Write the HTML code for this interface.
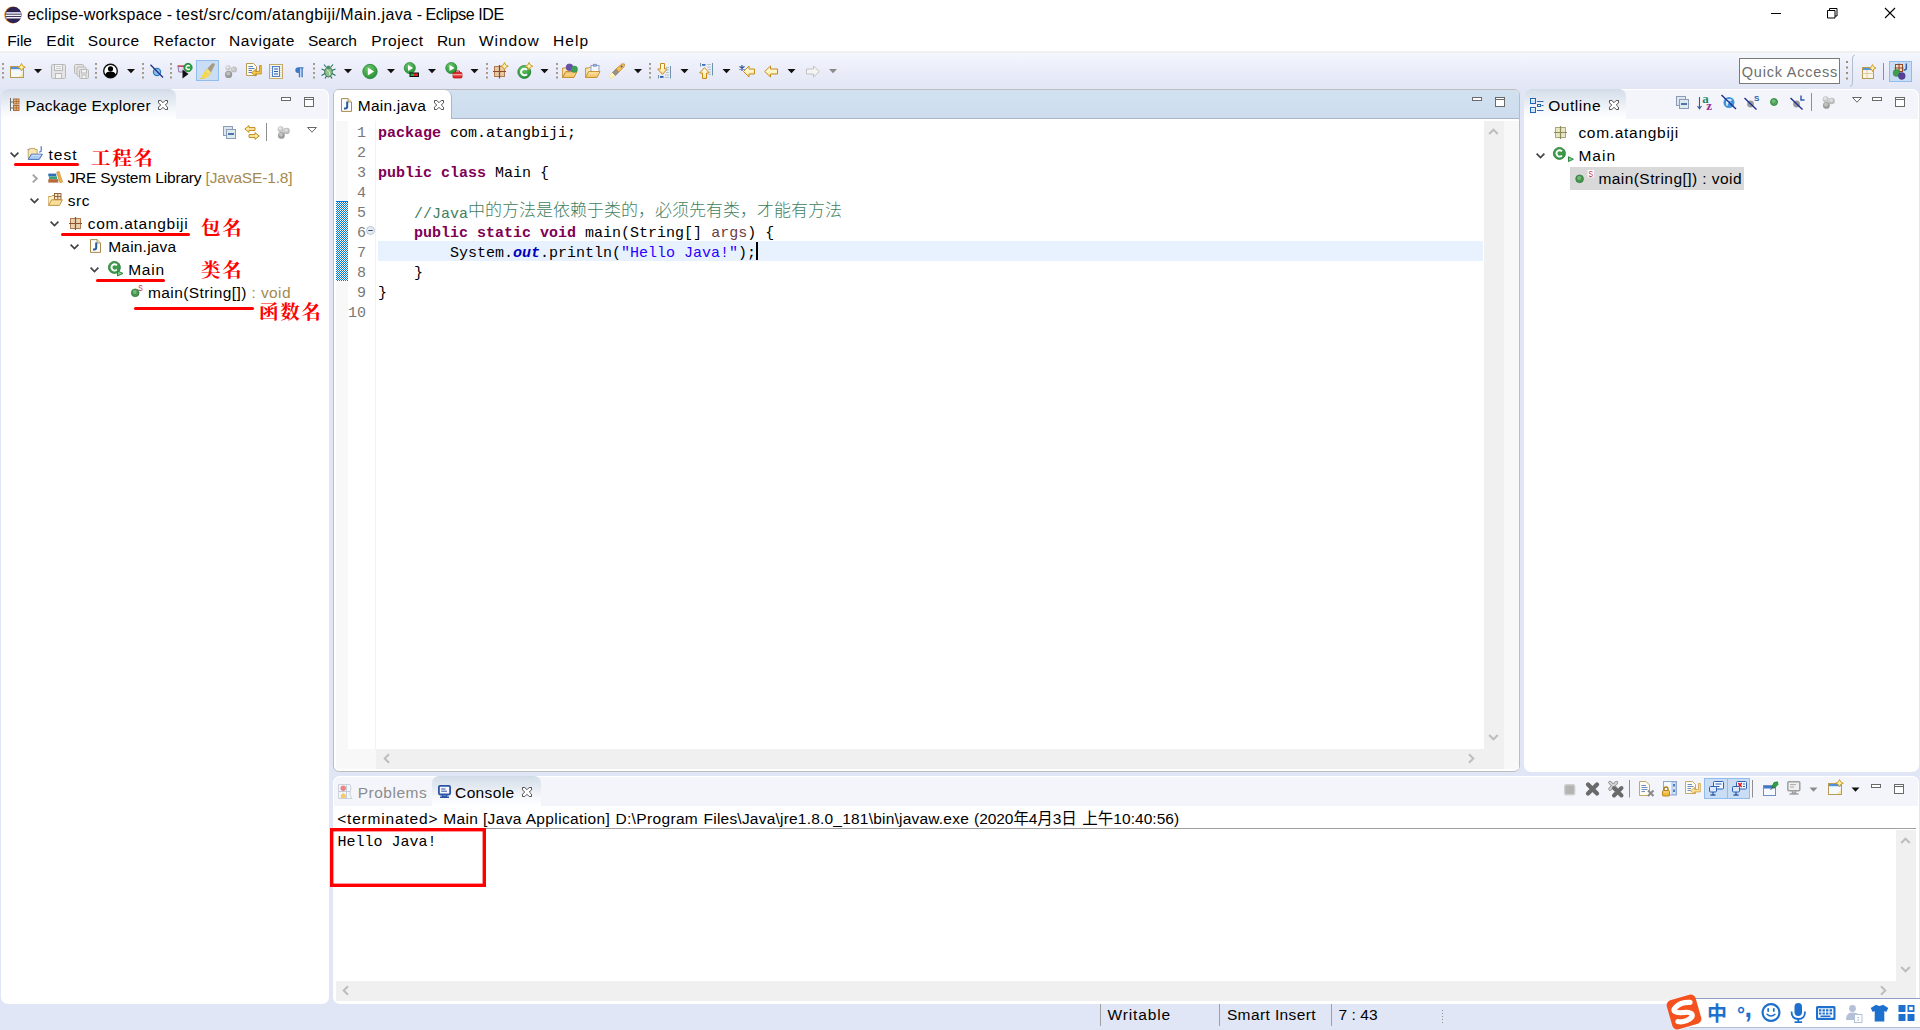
<!DOCTYPE html>
<html lang="en">
<head>
<meta charset="utf-8">
<title>eclipse-workspace - test/src/com/atangbiji/Main.java - Eclipse IDE</title>
<style>
html,body{margin:0;padding:0;}
body{width:1920px;height:1030px;overflow:hidden;position:relative;background:#E1E6F6;
  font-family:"Liberation Sans","Noto Sans CJK SC",sans-serif;font-size:15.5px;color:#000;}
.a{position:absolute;}
.x{position:absolute;white-space:pre;line-height:20px;height:20px;}
.mono{font-family:"Liberation Mono","Noto Sans CJK SC",monospace;font-size:15px;}
svg{position:absolute;overflow:visible;}
/* title + menu */
#titlebar{left:0;top:0;width:1920px;height:30px;background:#fff;}
#menubar{left:0;top:30px;width:1920px;height:21px;background:#fff;}
#menuline{left:0;top:51px;width:1920px;height:2px;background:#F0F0F0;}
#toolbar{left:0;top:53px;width:1920px;height:36px;background:linear-gradient(#F5F7FC 0%,#F0F3FC 20%,#E9ECF8 55%,#E1E6F6 100%);}
/* panels */
.panel{position:absolute;background:#fff;border-radius:7px;overflow:hidden;}
.hdr{position:absolute;left:0;top:0;right:0;height:30px;background:#F4F5FB;border:1px solid #fff;border-bottom:none;box-sizing:border-box;border-radius:7px 7px 0 0;}
.tab{position:absolute;top:0;height:30px;background:linear-gradient(#CFD8E3 0,#D4DEE9 1px,#E3E9F1 35%,#F5F7FA 70%,#FFFFFF 100%);border-radius:0 7px 0 0;}
.sep{position:absolute;width:1px;background:#8F8F8F;}
.dd{position:absolute;width:0;height:0;border-left:4px solid transparent;border-right:4px solid transparent;border-top:4px solid #111;}
.dd.g{border-top-color:#8a8a8a;}
.hdl{position:absolute;width:2px;height:17px;background:repeating-linear-gradient(#9C8F78 0 2px,transparent 2px 4px);}
.min{position:absolute;width:10px;height:4px;box-sizing:border-box;border:1px solid #6A6A6A;background:#fff;}
.max{position:absolute;width:10px;height:10px;box-sizing:border-box;border:1px solid #6A6A6A;background:linear-gradient(#fff 0 1px,#6A6A6A 1px 2px,#fff 2px) ;}
.tog{position:absolute;box-sizing:border-box;background:#C9DEF5;border:1px solid #90BDEE;}
.red{color:#FF0000;font-family:"Noto Serif CJK SC","Noto Sans CJK SC",serif;font-weight:700;font-size:19.5px;letter-spacing:1.8px;line-height:24px;height:24px;}
.ul{position:absolute;height:3px;border-radius:2px;background:#FF0000;}
.kw{color:#7F0055;font-weight:bold;}
.ln{position:absolute;left:14px;width:19px;text-align:right;color:#787878;line-height:20px;height:20px;white-space:pre;}
.cl{position:absolute;left:45px;line-height:20px;height:20px;white-space:pre;}
.sb{background:#F0F0F0;}
</style>
</head>
<body>

<!-- ===== Title bar ===== -->
<div id="titlebar" class="a"></div>
<div id="menubar" class="a"></div>
<div id="menuline" class="a"></div>
<div id="toolbar" class="a"></div>

<svg style="left:4px;top:6px" width="18" height="18" viewBox="0 0 18 18">
  <circle cx="8.6" cy="9" r="8.4" fill="#F7941E"/>
  <circle cx="9.4" cy="9" r="8.2" fill="#2C2255"/>
  <rect x="2.2" y="6.2" width="14.6" height="1.5" fill="#fff" opacity=".95"/>
  <rect x="1.6" y="8.6" width="15.6" height="1.5" fill="#fff" opacity=".95"/>
  <rect x="2.2" y="11" width="14.6" height="1.5" fill="#fff" opacity=".95"/>
</svg>
<span class="x" id="t_t1" style="left:26.9px;top:5.300px;font-size:16px;letter-spacing:0.21px">eclipse-workspace -</span>
<span class="x" id="t_t2" style="left:176.1px;top:5.300px;font-size:16px;letter-spacing:0.41px">test/src/com/atangbiji/Main.java</span>
<span class="x" id="t_t3" style="left:416.7px;top:5.300px;font-size:16px;letter-spacing:-0.42px">- Eclipse IDE</span>

<!-- window buttons -->
<svg style="left:1771px;top:8px" width="124" height="12" viewBox="0 0 124 12" fill="none" stroke="#000" stroke-width="1">
  <path d="M0 5.5H10"/>
  <path d="M56.5 2.5h7.500v7.500h-7.500z M58.500 2.500V.500h7.500V8h-2"/>
  <path d="M114 0l10 10M124 0l-10 10" stroke-width="1.1"/>
</svg>

<!-- ===== Menu ===== -->
<span class="x" id="m1" style="left:7.2px;top:30.600px;letter-spacing:-0.11px">File</span>
<span class="x" id="m2" style="left:46.3px;top:30.600px;letter-spacing:0.33px">Edit</span>
<span class="x" id="m3" style="left:87.8px;top:30.600px;letter-spacing:0.42px">Source</span>
<span class="x" id="m4" style="left:153.2px;top:30.600px;letter-spacing:0.55px">Refactor</span>
<span class="x" id="m5" style="left:229.1px;top:30.600px;letter-spacing:0.58px">Navigate</span>
<span class="x" id="m6" style="left:308.1px;top:30.600px;letter-spacing:-0.08px">Search</span>
<span class="x" id="m7" style="left:371.3px;top:30.600px;letter-spacing:0.59px">Project</span>
<span class="x" id="m8" style="left:436.9px;top:30.600px;letter-spacing:-0.02px">Run</span>
<span class="x" id="m9" style="left:479.1px;top:30.600px;letter-spacing:0.87px">Window</span>
<span class="x" id="m10" style="left:553.1px;top:30.600px;letter-spacing:1.02px">Help</span>

<!-- ===== Toolbar ===== -->
<!--TB-BEGIN-->
<svg id="tbsvg" style="left:0;top:52px" width="1920" height="37" viewBox="0 52 1920 37">
 <defs>
  <linearGradient id="gy" x1="0" y1="0" x2="0" y2="1"><stop offset="0" stop-color="#FFFBE6"/><stop offset=".55" stop-color="#FFF3C4"/><stop offset="1" stop-color="#F9DC85"/></linearGradient>
  <radialGradient id="gg" cx=".4" cy=".3" r=".8"><stop offset="0" stop-color="#6CC76A"/><stop offset="1" stop-color="#1E8A2E"/></radialGradient>
  <linearGradient id="gf" x1="0" y1="0" x2="0" y2="1"><stop offset="0" stop-color="#FCE6A6"/><stop offset="1" stop-color="#F2BE5A"/></linearGradient>
 </defs>
 <!-- handles -->
 <g fill="#A39A86">
  <path d="M2 63h2v2h-2zM2 67.500h2v2h-2zM2 72h2v2h-2zM2 76.500h2v2h-2z"/>
  <path d="M95 63h2v2h-2zM95 67.500h2v2h-2zM95 72h2v2h-2zM95 76.500h2v2h-2z"/>
  <path d="M142 63h2v2h-2zM142 67.500h2v2h-2zM142 72h2v2h-2zM142 76.500h2v2h-2z"/>
  <path d="M170 63h2v2h-2zM170 67.500h2v2h-2zM170 72h2v2h-2zM170 76.500h2v2h-2z"/>
  <path d="M313 63h2v2h-2zM313 67.500h2v2h-2zM313 72h2v2h-2zM313 76.500h2v2h-2z"/>
  <path d="M486 63h2v2h-2zM486 67.500h2v2h-2zM486 72h2v2h-2zM486 76.500h2v2h-2z"/>
  <path d="M556 63h2v2h-2zM556 67.500h2v2h-2zM556 72h2v2h-2zM556 76.500h2v2h-2z"/>
  <path d="M649 63h2v2h-2zM649 67.500h2v2h-2zM649 72h2v2h-2zM649 76.500h2v2h-2z"/>
 </g>
 <!-- dropdown arrows -->
 <g fill="#111">
  <path d="M34 69h8l-4 4.300z"/><path d="M127 69h8l-4 4.300z"/><path d="M344 69h8l-4 4.300z"/><path d="M387 69h8l-4 4.300z"/>
  <path d="M428 69h8l-4 4.300z"/><path d="M470.500 69h8l-4 4.300z"/><path d="M540.500 69h8l-4 4.300z"/><path d="M634 69h8l-4 4.300z"/>
  <path d="M680.500 69h8l-4 4.300z"/><path d="M722.500 69h8l-4 4.300z"/><path d="M787.500 69h8l-4 4.300z"/>
 </g>
 <path d="M829 69h8l-4 4.300z" fill="#8A8A8A"/>

 <!-- new -->
 <g transform="translate(10,64)">
  <rect x=".5" y="2.500" width="13" height="11" fill="#F4F9FF" stroke="#B89A52"/>
  <rect x="1" y="3" width="12" height="2.200" fill="#4F8FDC"/>
  <path d="M7 13Q12 12.500 13 7V13Z" fill="#F7E6A8"/>
  <path d="M11.500 -.5L12.700 2 15.300 3.200 12.700 4.400 11.500 7 10.300 4.400 7.700 3.200 10.300 2Z" fill="#FFF3B0" stroke="#C9971C" stroke-width=".9"/>
 </g>
 <!-- save (disabled) -->
 <g transform="translate(51,64)" fill="#E4E4E4" stroke="#B9B9B9">
  <path d="M.5 1.500Q.5 .5 1.500 .5H13.500Q14.500 .5 14.500 1.500V13.500Q14.500 14.500 13.500 14.500H1.500Q.5 14.500 .5 13.500Z"/>
  <rect x="3.500" y=".5" width="8" height="6" fill="#F3F3F3"/>
  <rect x="4.500" y="9.500" width="6" height="5" fill="#F3F3F3"/>
  <path d="M5 2.500H10M5 4.500H10" stroke-width=".7"/>
 </g>
 <!-- save all (disabled) -->
 <g transform="translate(74,64)" fill="#E4E4E4" stroke="#B9B9B9">
  <rect x=".5" y=".5" width="9" height="9" rx="1"/>
  <rect x="3" y="3" width="9" height="9" rx="1"/>
  <rect x="5.500" y="5.500" width="9" height="9" rx="1"/>
  <rect x="7.500" y="5.500" width="5" height="3.500" fill="#F3F3F3"/>
  <rect x="8" y="11" width="4" height="3.500" fill="#F3F3F3"/>
 </g>
 <!-- person -->
 <g transform="translate(103,63)">
  <circle cx="7.500" cy="8" r="6.800" fill="#fff" stroke="#111" stroke-width="1.400"/>
  <circle cx="7.500" cy="5.800" r="2.600" fill="#000"/>
  <path d="M2.200 12Q3 8.600 7.500 8.600T12.800 12Q10.500 14.600 7.500 14.600T2.200 12Z" fill="#000"/>
 </g>
 <!-- skip breakpoints -->
 <g transform="translate(150,64)">
  <circle cx="7" cy="8" r="3.600" fill="#8EC0E8" stroke="#2F7BBE" stroke-width="1.200"/>
  <path d="M.5 .8L13 13.500" stroke="#1F2F8A" stroke-width="1.300"/>
 </g>
 <!-- open java element-ish -->
 <g transform="translate(177,63)">
  <path d="M1 3.500H8V9H1.800Z" fill="#E8D8F0" stroke="#8A6AA8" stroke-width=".9"/>
  <path d="M.5 3H8.500" stroke="#C04A4A" stroke-width="1.400"/>
  <path d="M5.500 6.500L11.500 11 5.500 15.500Z" fill="#111"/>
  <circle cx="11" cy="4.500" r="4.200" fill="#2FA043" stroke="#1A7A2C" stroke-width=".7"/>
  <path d="M12.800 3.200Q11 1.800 9.700 3.200T9.700 5.800Q11 7.200 12.800 5.800" fill="none" stroke="#fff" stroke-width="1.300"/>
 </g>
 <!-- toggle mark occurrences (highlighted) -->
 <rect x="196.500" y="60.500" width="22" height="20" fill="#C9DEF5" stroke="#90BDEE"/>
 <g transform="translate(199,62)">
  <path d="M2 15.500L5.500 9.500 10.500 13.500 7.500 15.800Z" fill="#F6D84A"/>
  <path d="M.5 16.300H6" stroke="#E9C93A" stroke-width="1"/>
  <path d="M5.500 9.500L13 1.500Q15.500 .5 16 2.500L10.500 13.500Z" fill="#A79B86"/>
  <path d="M5.500 9.500L8.500 6.300 12 10.500 10.500 13.500Z" fill="#F2DC6A"/>
 </g>
 <!-- grey balls -->
 <g transform="translate(224,65)">
  <circle cx="4" cy="2.800" r="2.600" fill="#C4C4C4"/><circle cx="3.600" cy="2.300" r="1.500" fill="#E4E4E4"/><circle cx="10" cy="4.600" r="3" fill="#BCBCBC"/><circle cx="9.600" cy="4" r="1.700" fill="#DEDEDE"/><circle cx="4.600" cy="9.400" r="3.600" fill="#9A9A9A"/><circle cx="4.200" cy="8.500" r="2" fill="#C0C0C0"/>
  <path d="M8 2L12.600 2.600 10.600 6.500" fill="#C9C9C9"/>
 </g>
 <!-- word wrap -->
 <g transform="translate(246,63)">
  <path d="M.5 .5H7.500L10.500 3.500V12.500H.5Z" fill="#FFFDF2" stroke="#B89A52"/>
  <path d="M2.500 3.500H7M2.500 5.500H8.500M2.500 7.500H6M2.500 9.500H6" stroke="#5C7FBF" stroke-width="1"/>
  <path d="M13.500 2.500V8.500H9.500V6.500L5.500 9.700 9.500 12.900V10.900H15.300V2.500Z" fill="#F7C84A" stroke="#B9861A" stroke-width=".8" stroke-linejoin="round"/>
 </g>
 <!-- block selection -->
 <g transform="translate(269,64)">
  <rect x=".5" y=".5" width="13" height="14" fill="#FFFBEA" stroke="#C2A86A"/>
  <rect x="3.500" y="2.500" width="7" height="10" fill="#EAF2FC" stroke="#3F73C0" stroke-width=".9"/>
  <path d="M5 5H9M5 7.500H9M5 10H9" stroke="#2A5CB0" stroke-width="1.100"/>
  <path d="M2 2V13M12 2V13" stroke="#8FB0E0" stroke-width=".8" stroke-dasharray="1 1"/>
 </g>
 <!-- pilcrow -->
 <g transform="translate(295,67)">
  <path d="M8.500 .3H3.600Q.3 .3 .3 3.200T3.600 6H3.800V10.300H5.200V1.600H6.400V10.300H7.800V1.600H8.500Z" fill="#3F78C6"/>
 </g>
 <!-- bug -->
 <g transform="translate(321,63)">
  <path d="M3 1.500L5.500 4.500M12 1.500L9.500 4.500M.5 6L4 7.500M14.500 6L11 7.500M.5 12.500L4 10.500M14.500 12.500L11 10.500M4 15.500L5.500 13M11 15.500L9.500 13" stroke="#1F6F6A" stroke-width="1.100" fill="none"/>
  <ellipse cx="7.500" cy="9" rx="3.800" ry="5" fill="#8FBF8A" stroke="#2F6F4A" stroke-width=".9"/>
  <circle cx="7.500" cy="4.300" r="1.900" fill="#4F8F6A"/>
  <path d="M6 7Q9 8 9 12" stroke="#D6EBCF" stroke-width="1" fill="none"/>
 </g>
 <!-- run -->
 <g transform="translate(362.500,64)">
  <circle cx="7.500" cy="7.500" r="7.200" fill="url(#gg)" stroke="#1A7A2C" stroke-width=".7"/>
  <path d="M5.300 3.600L11.600 7.500 5.300 11.400Z" fill="#fff"/>
 </g>
 <!-- coverage -->
 <g transform="translate(404,62)">
  <circle cx="5.800" cy="6" r="5.600" fill="url(#gg)" stroke="#1A7A2C" stroke-width=".6"/>
  <path d="M4 3L9.200 6 4 9Z" fill="#fff"/>
  <rect x="5.500" y="10.500" width="9.500" height="4.500" fill="#111"/>
  <rect x="6.500" y="11.500" width="3.500" height="2.500" fill="#1FAF3F"/>
  <rect x="10" y="11.500" width="4" height="2.500" fill="#E0202A"/>
 </g>
 <!-- ext tools -->
 <g transform="translate(445.500,62)">
  <circle cx="5.800" cy="6" r="5.600" fill="url(#gg)" stroke="#1A7A2C" stroke-width=".6"/>
  <path d="M4 3L9.200 6 4 9Z" fill="#fff"/>
  <rect x="7.500" y="10.500" width="9" height="5.500" rx="1" fill="#E52A2A" stroke="#B01010" stroke-width=".7"/>
  <path d="M10 10.500V9H14V10.500" fill="none" stroke="#B01010" stroke-width="1"/>
  <path d="M7.500 12.800H16.500" stroke="#fff" stroke-width=".8"/>
 </g>
 <!-- new package -->
 <g transform="translate(493,63)">
  <rect x="1.500" y="3.500" width="10" height="10" fill="#E8C8A0" stroke="#B07A52"/>
  <path d="M6.500 2V15.500M0 8.500H13" stroke="#8E4A2A" stroke-width="1.200"/>
  <path d="M11.500 -.5L12.700 2 15.300 3.200 12.700 4.400 11.500 7 10.300 4.400 7.700 3.200 10.300 2Z" fill="#FFF3B0" stroke="#C9971C" stroke-width=".9"/>
 </g>
 <!-- new class -->
 <g transform="translate(517.500,63)">
  <circle cx="6.800" cy="9" r="6.500" fill="url(#gg)" stroke="#1A7A2C" stroke-width=".7"/>
  <path d="M9.600 6.800Q6.800 4.600 4.600 6.800T4.600 11.200Q6.800 13.400 9.600 11.200" fill="none" stroke="#fff" stroke-width="2"/>
  <path d="M11.500 -.5L12.700 2 15.300 3.200 12.700 4.400 11.500 7 10.300 4.400 7.700 3.200 10.300 2Z" fill="#FFF3B0" stroke="#C9971C" stroke-width=".9"/>
 </g>
 <!-- open type -->
 <g transform="translate(562,63)">
  <path d="M.6 14.500V5H4L5 4H8" fill="#FBE6B0" stroke="#C48A2A" stroke-width=".9"/>
  <path d="M.6 14.500L3.600 8.500H15L12 14.500Z" fill="url(#gf)" stroke="#C48A2A" stroke-width=".9" stroke-linejoin="round"/>
  <circle cx="7.500" cy="4.300" r="3.400" fill="#6A4FB0" stroke="#4A2F8A" stroke-width=".5"/>
  <circle cx="12.300" cy="6.200" r="3.200" fill="#3F9F5A" stroke="#2A7A3F" stroke-width=".5"/>
  <path d="M.6 14.500L3.600 9.800H14.300" fill="none" stroke="#C48A2A" stroke-width=".5"/>
 </g>
 <!-- open task -->
 <g transform="translate(585,63)">
  <path d="M.6 14.500V5H4L5 4H6" fill="#FBE6B0" stroke="#C48A2A" stroke-width=".9"/>
  <rect x="6" y="2.500" width="8" height="7" fill="#F2F6FC" stroke="#8A9CC0" stroke-width=".9"/>
  <rect x="8.500" y="1.200" width="3" height="2" fill="#9FB4DC" stroke="#6A80B0" stroke-width=".6"/>
  <path d="M.6 14.500L3.600 8.500H15L12 14.500Z" fill="url(#gf)" stroke="#C48A2A" stroke-width=".9" stroke-linejoin="round"/>
 </g>
 <!-- search flashlight -->
 <g transform="translate(609,63)">
  <path d="M1 15.500L.3 12.500 4 9 7 12Z" fill="#FFF6C0" stroke="#F2E08A" stroke-width=".8"/>
  <path d="M3.500 9.500L7 6 10 9 6.500 12.500Z" fill="#9A9088" stroke="#7A6F66" stroke-width=".6"/>
  <path d="M7 6L13 .8 15.500 1 15.200 3.500 10 9Z" fill="#F4C05A" stroke="#C48A2A" stroke-width=".8"/>
  <circle cx="12.600" cy="3.600" r="1" fill="#3F5FA0"/>
 </g>
 <!-- next annotation -->
 <g transform="translate(657,63)">
  <path d="M3.500 .5H7.500V6H10.300L5.500 11.300 .7 6H3.500Z" fill="url(#gy)" stroke="#C48A1A" stroke-width="1" stroke-linejoin="round"/>
  <path d="M13.500 3V15.500M1.500 12V15.500" stroke="#6F94A8" stroke-width="1"/>
  <path d="M9 4.500H12M9 7H12M9 9.500H12M8 12H12M8 14.500H12" stroke="#B0BCCC" stroke-width=".9"/>
  <rect x="3" y="13" width="3.500" height="1.800" fill="#2A5CB0"/>
 </g>
 <!-- prev annotation -->
 <g transform="translate(699,63)">
  <path d="M3.500 15.500H7.500V10H10.300L5.500 4.700 .7 10H3.500Z" fill="url(#gy)" stroke="#C48A1A" stroke-width="1" stroke-linejoin="round"/>
  <path d="M13.500 0V12.500M1.500 0V3.500" stroke="#6F94A8" stroke-width="1"/>
  <path d="M8 1.500H12M8 4H12M9 6.500H12M9.500 9H12M9.500 11.500H12" stroke="#B0BCCC" stroke-width=".9"/>
  <rect x="3" y="1" width="3.500" height="1.800" fill="#3F6FC0"/>
 </g>
 <!-- last edit location -->
 <g transform="translate(739,65)">
  <path d="M4.500 6.500L10 1V4H15.500V9H10V12Z" fill="url(#gy)" stroke="#C48A1A" stroke-width="1" stroke-linejoin="round"/>
  <path d="M3 0V6M.5 1.500L5.500 4.500M5.500 1.500L.5 4.500" stroke="#2A4F9A" stroke-width="1.100"/>
 </g>
 <!-- back -->
 <g transform="translate(764,65)">
  <path d="M.7 6.500L6.500 1V4H13.500V9H6.500V12Z" fill="url(#gy)" stroke="#C48A1A" stroke-width="1" stroke-linejoin="round"/>
 </g>
 <!-- forward (disabled) -->
 <g transform="translate(806,65)">
  <path d="M13.300 6.500L7.500 1V4H.5V9H7.500V12Z" fill="#F4F4F4" stroke="#C2C2C2" stroke-width="1" stroke-linejoin="round"/>
 </g>

 <!-- Quick access -->
 <rect x="1739.500" y="58.500" width="100" height="25" fill="#fff" stroke="#7A7A7A"/>
 <g fill="#9C8F78"><path d="M1846 61h2v2h-2zM1846 66.500h2v2h-2zM1846 72h2v2h-2zM1846 77.500h2v2h-2z"/></g>
 <path d="M1855 55Q1852.500 55.500 1852.500 58V83.500Q1852.500 86 1850 86.500" fill="none" stroke="#B4BCD0" stroke-width="1"/>
 <!-- open perspective -->
 <g transform="translate(1862,65)">
  <rect x=".5" y="2.500" width="11" height="11" fill="#FBF6E8" stroke="#B89A52"/>
  <rect x="1" y="3" width="10" height="2" fill="#5B93DC"/>
  <path d="M.5 8.500H11.500M5 5V13.500" stroke="#D9C79A" stroke-width=".9"/>
  <path d="M10.500 -.5L11.600 1.900 14 3 11.600 4.100 10.500 6.500 9.400 4.100 7 3 9.400 1.900Z" fill="#FFF3B0" stroke="#C9971C" stroke-width=".9"/>
 </g>
 <path d="M1883.500 63V80" stroke="#8F8F8F"/>
 <rect x="1889.500" y="61.500" width="22" height="20" fill="#C9DEF5" stroke="#90BDEE"/>
 <g transform="translate(1892,63)">
  <rect x="3.500" y="1.500" width="7" height="7" fill="#F0DCC0" stroke="#8E4A2A" stroke-width="1"/>
  <path d="M7 .5V9.500M2.500 5H11.500" stroke="#8E4A2A" stroke-width="1.100"/>
  <path d="M14.300 .5V5Q14.300 7 12.300 7H11.500" fill="none" stroke="#2F5FA8" stroke-width="1.500"/>
  <circle cx="4.500" cy="10" r="3.400" fill="#3F9F4A" stroke="#2A7A35" stroke-width=".5"/>
  <circle cx="9.800" cy="13" r="3.400" fill="#5A3F9A" stroke="#3F2A7A" stroke-width=".5"/>
 </g>
</svg>
<span class="x" id="qa" style="left:1741.8px;top:61.800px;color:#6E6E6E;font-size:14.500px;letter-spacing:0.77px">Quick Access</span>
<!--TB-END-->

<!-- ===== Package Explorer ===== -->
<div class="panel" id="pe" style="left:1px;top:89px;width:328px;height:915px;">
  <div class="hdr"></div>
  <div class="tab" style="left:0;width:175px;"></div>
</div>

<!-- ===== Editor ===== -->
<div class="panel" id="ed" style="left:333px;top:89px;width:1187px;height:683px;border:1px solid #BDBDBD;box-sizing:border-box;border-radius:6px;">
  <div class="a" style="left:0;top:0;right:0;height:29px;background:linear-gradient(#D2E1F0,#CEDDED);border-bottom:1px solid #AAB4CB;box-sizing:border-box;"></div>
  <div class="a" style="left:0;top:0;width:118px;height:29px;background:#fff;border-radius:0 7px 0 0;border-right:1px solid #AAB4CB;box-sizing:border-box;"></div>
</div>

<!-- ===== Outline ===== -->
<div class="panel" id="ol" style="left:1524px;top:89px;width:395px;height:683px;">
  <div class="hdr"></div>
  <div class="tab" style="left:0;width:102px;"></div>
</div>

<!-- ===== Console ===== -->
<div class="panel" id="co" style="left:333px;top:776px;width:1586px;height:228px;">
  <div class="hdr"></div>
  <div class="tab" style="left:99px;width:109px;border-radius:7px 7px 0 0;"></div>
</div>

<!--PE-BEGIN-->
<!-- PE header -->
<svg style="left:10px;top:98px" width="10" height="13" viewBox="0 0 10 13">
  <path d="M.5 0V13M.5 4H3M.5 10H3" stroke="#6B6B6B" fill="none"/>
  <rect x="3.500" y="1" width="5.500" height="5" fill="#E8B98A" stroke="#A8622A" stroke-width=".9"/>
  <rect x="3.500" y="7.500" width="5.500" height="5" fill="#E8B98A" stroke="#A8622A" stroke-width=".9"/>
  <path d="M6.250 1V6M3.500 3.500H9M6.250 7.500V12.500M3.500 10H9" stroke="#A8622A" stroke-width=".8"/>
</svg>
<span class="x" id="pe_title" style="left:25.4px;top:96px;letter-spacing:0.19px">Package Explorer</span>
<svg class="cx" style="left:158px;top:100px" width="10" height="10" viewBox="0 0 10 10"><path d="M.5 .5H2.800L5 2.700 7.200 .5H9.500V2.800L7.300 5 9.500 7.200V9.500H7.200L5 7.300 2.800 9.500H.5V7.200L2.700 5 .5 2.800Z" fill="#fff" stroke="#505050" stroke-width="1"/></svg>
<div class="min" style="left:281px;top:97px"></div>
<div class="max" style="left:304px;top:97px"></div>
<!-- PE toolbar -->
<svg style="left:223px;top:126px" width="13" height="13" viewBox="0 0 13 13">
  <rect x=".5" y=".5" width="9" height="9" fill="#DDE7F0" stroke="#8D9BB5"/>
  <rect x="3.500" y="3.500" width="9" height="9" fill="#DCEBEE" stroke="#8D9BB5"/>
  <path d="M5 8H11" stroke="#1B4F9C" stroke-width="1.500"/>
</svg>
<svg style="left:244px;top:125px" width="16" height="15" viewBox="0 0 16 15">
  <path d="M.8 4L5 .6V2.600H11V5.400H5V7.400Z" fill="#FCE9A8" stroke="#C48A1A" stroke-width="1" stroke-linejoin="round"/>
  <path d="M15.200 11L11 7.600V9.600H5V12.400H11V14.400Z" fill="#FCE9A8" stroke="#C48A1A" stroke-width="1" stroke-linejoin="round"/>
</svg>
<div class="sep" style="left:266px;top:123px;height:18px"></div>
<svg style="left:277px;top:126px" width="13" height="13" viewBox="0 0 13 13">
  <circle cx="3.600" cy="3.200" r="3" fill="#C4C4C4"/><circle cx="3.200" cy="2.600" r="1.700" fill="#E4E4E4"/><circle cx="9.600" cy="5" r="3.200" fill="#BCBCBC"/><circle cx="9.200" cy="4.300" r="1.800" fill="#DEDEDE"/><circle cx="4.400" cy="9.400" r="3.400" fill="#9C9C9C"/><circle cx="4" cy="8.500" r="1.900" fill="#C2C2C2"/>
</svg>
<svg style="left:307px;top:127px" width="10" height="6" viewBox="0 0 10 6"><path d="M.6 .5H9.400L5 5.200Z" fill="#fff" stroke="#555" stroke-width=".9"/></svg>

<!-- PE tree -->
<svg style="left:10px;top:152px" width="9" height="6" viewBox="0 0 9 6"><path d="M.6 .6L4.500 4.600 8.400 .6" fill="none" stroke="#404040" stroke-width="1.600"/></svg>
<svg style="left:27px;top:146px" width="16" height="14" viewBox="0 0 16 14">
  <path d="M1.200 12.500V3.600H2.600V2.400H8V3.600H10.200V8" fill="#F8E6AE" stroke="#B9A36A" stroke-width=".9"/>
  <path d="M.6 3.600H2" stroke="#8A7AA0" stroke-width=".9"/>
  <path d="M1.200 13.400L4.400 8.200H15.400L12.200 13.400Z" fill="#A9CDF5" stroke="#3F5FB5" stroke-width=".9" stroke-linejoin="round"/>
  <path d="M4.800 9.200H14" stroke="#D8EAFB" stroke-width=".9"/>
  <path d="M14.200 .3V4.500Q14.200 6 12.800 6H12" fill="none" stroke="#3B6BB5" stroke-width="1.100"/>
</svg>
<span class="x" id="pe_r1" style="left:48.4px;top:144.600px;letter-spacing:1.07px">test</span>
<div class="ul" style="left:14px;top:162.600px;width:65px"></div>
<span class="x red" id="pe_a1" style="left:91px;top:145px">工程名</span>

<svg style="left:32px;top:174px" width="6" height="9" viewBox="0 0 6 9"><path d="M.8 .6L4.800 4.500 .8 8.400" fill="none" stroke="#A3A3A3" stroke-width="1.900"/></svg>
<svg style="left:48px;top:171px" width="15" height="12" viewBox="0 0 15 12">
  <rect x=".3" y="2.600" width="8" height="2.800" fill="#2F6FB8"/>
  <rect x="1" y="5.400" width="8" height="2.800" fill="#3FA27A"/>
  <rect x=".3" y="8.200" width="10" height="3.400" fill="#B5683A"/>
  <path d="M8.600 1.300L11 .3 14.600 11 12 11.800Z" fill="#EDB24A" stroke="#C28A28" stroke-width=".6"/>
</svg>
<span class="x" id="pe_r2" style="left:67.4px;top:167.600px;letter-spacing:-0.16px">JRE System Library <span style="color:#A38A4E">[JavaSE-1.8]</span></span>

<svg style="left:30px;top:198px" width="9" height="6" viewBox="0 0 9 6"><path d="M.6 .6L4.500 4.600 8.400 .6" fill="none" stroke="#404040" stroke-width="1.600"/></svg>
<svg style="left:48px;top:193px" width="15" height="13" viewBox="0 0 15 13">
  <path d="M.6 12.400V3.500H3L4 2.500H6.500" fill="#FBEFC4" stroke="#B98B3A" stroke-width=".9"/>
  <path d="M.6 12.400V4H6.500V7" fill="#FBEFC4" stroke="none"/>
  <rect x="6.500" y=".5" width="6.500" height="6" fill="#F3E3C0" stroke="#8A5A3A" stroke-width=".9"/>
  <path d="M9.750 .5V6.500M6.500 3.500H13" stroke="#8A5A3A" stroke-width=".9"/>
  <path d="M.6 12.400L3.600 6.800H14.400L11.400 12.400Z" fill="#F9DD9A" stroke="#B98B3A" stroke-width=".9" stroke-linejoin="round"/>
</svg>
<span class="x" id="pe_r3" style="left:67.8px;top:190.600px;letter-spacing:0.57px">src</span>

<svg style="left:50px;top:221px" width="9" height="6" viewBox="0 0 9 6"><path d="M.6 .6L4.500 4.600 8.400 .6" fill="none" stroke="#404040" stroke-width="1.600"/></svg>
<svg style="left:69px;top:217px" width="13" height="13" viewBox="0 0 13 13">
  <rect x="1.500" y="1.500" width="10" height="10" fill="#EAD2AC" stroke="#B07A52" stroke-width="1"/>
  <path d="M6.500 0V13M0 6.500H13" stroke="#8E5233" stroke-width="1.200"/>
</svg>
<span class="x" id="pe_r4" style="left:87.8px;top:213.600px;letter-spacing:0.71px">com.atangbiji</span>
<div class="ul" style="left:61px;top:232.500px;width:129px"></div>
<span class="x red" id="pe_a2" style="left:201px;top:215px">包名</span>

<svg style="left:70px;top:244px" width="9" height="6" viewBox="0 0 9 6"><path d="M.6 .6L4.500 4.600 8.400 .6" fill="none" stroke="#404040" stroke-width="1.600"/></svg>
<svg style="left:90px;top:239px" width="11" height="14" viewBox="0 0 11 14">
  <path d="M.5 .6H7L10.500 4V13.400H.5Z" fill="#FBFCFF" stroke="#A88A4A" stroke-width="1"/>
  <path d="M7 .6V4H10.500" fill="#E9DDB5" stroke="#A88A4A" stroke-width=".8"/>
  <path d="M6.200 3.600V8.600Q6.200 10.600 4.200 10.600H3" fill="none" stroke="#2B5A9E" stroke-width="2"/>
</svg>
<span class="x" id="pe_r5" style="left:108.2px;top:236.600px;letter-spacing:0.21px">Main.java</span>

<svg style="left:90px;top:267px" width="9" height="6" viewBox="0 0 9 6"><path d="M.6 .6L4.500 4.600 8.400 .6" fill="none" stroke="#404040" stroke-width="1.600"/></svg>
<svg style="left:108px;top:261px" width="16" height="15" viewBox="0 0 16 15">
  <circle cx="6.400" cy="6.400" r="6" fill="#3C9A4B" stroke="#2C7A3A" stroke-width=".8"/>
  <path d="M9 4.200Q6.400 2.200 4.400 4.200T4.400 8.600Q6.400 10.600 9 8.600" fill="none" stroke="#fff" stroke-width="1.800"/>
  <path d="M9.500 9.800L15 12.400 9.500 15Z" fill="#7CCB86" stroke="#1F7A38" stroke-width=".9" stroke-linejoin="round"/>
</svg>
<span class="x" id="pe_r6" style="left:128.2px;top:259.600px;letter-spacing:0.75px">Main</span>
<div class="ul" style="left:96px;top:278.600px;width:69px"></div>
<span class="x red" id="pe_a3" style="left:201px;top:257px">类名</span>

<svg style="left:131px;top:284px" width="12" height="13" viewBox="0 0 12 13">
  <circle cx="4.200" cy="8.800" r="3.900" fill="#47944F" stroke="#2F7A3D" stroke-width=".7"/><circle cx="3.800" cy="8" r="2" fill="#84C486" opacity=".75"/>
  <text transform="translate(7.300,6.900) scale(.72,1)" font-family="Liberation Sans,sans-serif" font-size="9.500" fill="#C4263A">S</text>
</svg>
<span class="x" id="pe_r7" style="left:148.0px;top:282.600px;letter-spacing:0.41px">main(String[]) <span style="color:#A38A4E">: void</span></span>
<div class="ul" style="left:133.700px;top:306.600px;width:120px"></div>
<span class="x red" id="pe_a4" style="left:259px;top:299px">函数名</span>
<!--PE-END-->

<!--ED-BEGIN-->
<!-- Editor tab -->
<svg style="left:341px;top:98px" width="11" height="14" viewBox="0 0 11 14">
  <path d="M.5 .6H7L10.500 4V13.400H.5Z" fill="#FBFCFF" stroke="#A88A4A" stroke-width="1"/>
  <path d="M7 .6V4H10.500" fill="#E9DDB5" stroke="#A88A4A" stroke-width=".8"/>
  <path d="M6.200 3.600V8.600Q6.200 10.600 4.200 10.600H3" fill="none" stroke="#2B5A9E" stroke-width="2"/>
</svg>
<span class="x" id="ed_title" style="left:357.8px;top:96px;letter-spacing:0.23px">Main.java</span>
<svg class="cx" style="left:434px;top:100px" width="10" height="10" viewBox="0 0 10 10"><path d="M.5 .5H2.800L5 2.700 7.200 .5H9.500V2.800L7.300 5 9.500 7.200V9.500H7.200L5 7.300 2.800 9.500H.5V7.200L2.700 5 .5 2.800Z" fill="#fff" stroke="#505050" stroke-width="1"/></svg>
<div class="min" style="left:1472px;top:97px"></div>
<div class="max" style="left:1495px;top:97px"></div>

<!-- Editor body -->
<div class="a" style="left:336px;top:121px;width:12px;height:628px;background:#F8F8F8"></div>
<div class="a" style="left:336px;top:749px;width:40px;height:20px;background:#F8F8F8"></div>
<div class="a" style="left:336px;top:201px;width:12px;height:80px;background:conic-gradient(#0078D7 25%,#fff 0 50%,#0078D7 0 75%,#fff 0) 0 0/2px 2px;border-top:1px solid #0078D7;box-sizing:border-box"></div>
<div class="a" style="left:375px;top:121px;width:1px;height:628px;background:#F2F2F2"></div>
<div class="a" style="left:378px;top:241px;width:1105px;height:20px;background:#E8F2FE"></div>
<div class="a mono" id="lnums" style="left:333px;top:123.800px;">
  <span class="ln" style="top:0">1</span><span class="ln" style="top:20px">2</span><span class="ln" style="top:40px">3</span><span class="ln" style="top:60px">4</span><span class="ln" style="top:80px">5</span><span class="ln" style="top:100px">6</span><span class="ln" style="top:120px">7</span><span class="ln" style="top:140px">8</span><span class="ln" style="top:160px">9</span><span class="ln" style="top:180px">10</span>
</div>
<svg style="left:366px;top:226px" width="9" height="9" viewBox="0 0 9 9"><circle cx="4.500" cy="4.500" r="4" fill="#E6EBF3" stroke="#B4C0D4" stroke-width=".9"/><path d="M2.300 4.500H6.700" stroke="#3A4A6A" stroke-width="1"/></svg>
<div class="a mono" id="code" style="left:333px;top:123.800px;">
  <span class="cl" id="c1" style="top:0"><span class="kw">package</span> com.atangbiji;</span>
  <span class="cl" id="c3" style="top:40px"><span class="kw">public</span> <span class="kw">class</span> Main {</span>
  <span class="cl" id="c5" style="top:80px;color:#3F7F5F">    //Java<span style="font-size:17px;font-weight:300;position:relative;top:-1.500px">中的方法是依赖于类的，必须先有类，才能有方法</span></span>
  <span class="cl" id="c6" style="top:100px">    <span class="kw">public</span> <span class="kw">static</span> <span class="kw">void</span> main(String[] <span style="color:#6A3E3E">args</span>) {</span>
  <span class="cl" id="c7" style="top:120px">        System.<span style="color:#0000C0;font-weight:bold;font-style:italic">out</span>.println(<span style="color:#2A00FF">"Hello Java!"</span>);</span>
  <span class="cl" id="c8" style="top:140px">    }</span>
  <span class="cl" id="c9" style="top:160px">}</span>
</div>
<div class="a" style="left:756px;top:242px;width:2px;height:18px;background:#000"></div>
<!-- scrollbars -->
<div class="a sb" style="left:1484px;top:121px;width:20px;height:648px"></div>
<div class="a sb" style="left:376px;top:749px;width:1108px;height:20px"></div>
<div class="a" style="left:1504px;top:121px;width:15px;height:648px;background:#F8F8F8"></div>
<svg style="left:1488px;top:128px" width="11" height="7" viewBox="0 0 11 7"><path d="M1.200 6L5.500 1.700 9.800 6" fill="none" stroke="#BDBDBD" stroke-width="2"/></svg>
<svg style="left:1488px;top:734px" width="11" height="7" viewBox="0 0 11 7"><path d="M1.200 1L5.500 5.300 9.800 1" fill="none" stroke="#BDBDBD" stroke-width="2"/></svg>
<svg style="left:383px;top:753px" width="7" height="11" viewBox="0 0 7 11"><path d="M6 1.200L1.700 5.500 6 9.800" fill="none" stroke="#BDBDBD" stroke-width="2"/></svg>
<svg style="left:1468px;top:753px" width="7" height="11" viewBox="0 0 7 11"><path d="M1 1.200L5.300 5.500 1 9.800" fill="none" stroke="#BDBDBD" stroke-width="2"/></svg>
<!--ED-END-->

<!--OL-BEGIN-->
<!-- Outline header -->
<svg style="left:1530px;top:98px" width="14" height="15" viewBox="0 0 14 15">
  <rect x=".5" y=".5" width="5" height="5" fill="#CFE6FB" stroke="#1F65B0"/>
  <rect x=".5" y="9.500" width="5" height="5" fill="#CFE6FB" stroke="#1F65B0"/>
  <path d="M1.500 1.500H4.500M1.500 10.500H4.500" stroke="#fff"/>
  <path d="M7 3.500H13.500M7 12.500H13.500M11.500 7.500H13.500" stroke="#2A6AAA"/>
  <rect x="7.500" y="6.500" width="3" height="2" fill="#fff" stroke="#1F65B0"/>
</svg>
<span class="x" id="ol_title" style="left:1548.2px;top:96px;letter-spacing:0.56px">Outline</span>
<svg class="cx" style="left:1609px;top:100px" width="10" height="10" viewBox="0 0 10 10"><path d="M.5 .5H2.800L5 2.700 7.200 .5H9.500V2.800L7.300 5 9.500 7.200V9.500H7.200L5 7.300 2.800 9.500H.5V7.200L2.700 5 .5 2.800Z" fill="#fff" stroke="#505050" stroke-width="1"/></svg>
<!-- Outline toolbar -->
<svg style="left:1676px;top:96px" width="13" height="13" viewBox="0 0 13 13">
  <rect x=".5" y=".5" width="9" height="9" fill="#DDE7F0" stroke="#8D9BB5"/>
  <rect x="3.500" y="3.500" width="9" height="9" fill="#DCEBEE" stroke="#8D9BB5"/>
  <path d="M5 8H11" stroke="#1B4F9C" stroke-width="1.500"/>
</svg>
<svg style="left:1697px;top:94px" width="17" height="17" viewBox="0 0 17 17">
  <path d="M2.500 3V14.500M.5 12L2.500 14.800 4.500 12" fill="none" stroke="#3A5A8A" stroke-width="1.100"/>
  <text x="5.200" y="8.600" font-family="Liberation Serif,serif" font-weight="bold" font-size="13" fill="#1F8A6A">a</text>
  <text x="9.200" y="16.300" font-family="Liberation Serif,serif" font-weight="bold" font-size="13" fill="#9A2F9A">z</text>
</svg>
<svg style="left:1721px;top:94px" width="16" height="16" viewBox="0 0 16 16">
  <circle cx="8" cy="8.500" r="5.500" fill="#3F95DC"/>
  <path d="M6 6H10.500M6 6V11.500M6 8.600H9.500" stroke="#fff" stroke-width="1.500" fill="none"/>
  <path d="M.5 1L15 15" stroke="#1F2F8A" stroke-width="1.400"/>
</svg>
<svg style="left:1744px;top:94px" width="16" height="16" viewBox="0 0 16 16">
  <circle cx="6.500" cy="10" r="3.400" fill="#9A9A9A"/>
  <path d="M.5 4L12.500 15.500" stroke="#1F2F8A" stroke-width="1.400"/>
  <text x="10" y="6.500" font-family="Liberation Sans,sans-serif" font-weight="bold" font-size="8" fill="#2F5FA8">S</text>
</svg>
<svg style="left:1769px;top:97px" width="10" height="10" viewBox="0 0 10 10"><circle cx="5" cy="5" r="3.500" fill="#4FA558" stroke="#2F8A3F" stroke-width=".9"/><circle cx="4.600" cy="4.200" r="1.600" fill="#86C98A" opacity=".7"/></svg>
<svg style="left:1790px;top:94px" width="16" height="16" viewBox="0 0 16 16">
  <circle cx="6.500" cy="10" r="3.400" fill="#9A9A9A"/>
  <path d="M.5 4L12.500 15.500" stroke="#1F2F8A" stroke-width="1.400"/>
  <path d="M11 1.500V6H14.500" stroke="#2F5FA8" stroke-width="1.500" fill="none"/>
</svg>
<div class="sep" style="left:1811px;top:93px;height:18px"></div>
<svg style="left:1822px;top:96px" width="13" height="13" viewBox="0 0 13 13">
  <circle cx="3.600" cy="3.200" r="3" fill="#C4C4C4"/><circle cx="3.200" cy="2.600" r="1.700" fill="#E4E4E4"/><circle cx="9.600" cy="5" r="3.200" fill="#BCBCBC"/><circle cx="9.200" cy="4.300" r="1.800" fill="#DEDEDE"/><circle cx="4.400" cy="9.400" r="3.400" fill="#9C9C9C"/><circle cx="4" cy="8.500" r="1.900" fill="#C2C2C2"/>
</svg>
<svg style="left:1852px;top:97px" width="10" height="6" viewBox="0 0 10 6"><path d="M.6 .5H9.400L5 5.200Z" fill="#fff" stroke="#555" stroke-width=".9"/></svg>
<div class="min" style="left:1872px;top:97px"></div>
<div class="max" style="left:1895px;top:97px"></div>
<!-- Outline tree -->
<svg style="left:1554px;top:126px" width="13" height="13" viewBox="0 0 13 13">
  <rect x="1.500" y="1.500" width="10" height="10" fill="#E9E6C4" stroke="#A8A878" stroke-width="1"/>
  <path d="M6.500 0V13M0 6.500H13" stroke="#8A8A5A" stroke-width="1.200"/>
</svg>
<span class="x" id="ol_r1" style="left:1578.4px;top:122.600px;letter-spacing:0.7px">com.atangbiji</span>
<svg style="left:1536px;top:153px" width="9" height="6" viewBox="0 0 9 6"><path d="M.6 .6L4.500 4.600 8.400 .6" fill="none" stroke="#404040" stroke-width="1.600"/></svg>
<svg style="left:1553px;top:147px" width="21" height="15" viewBox="0 0 21 15">
  <circle cx="6.400" cy="6.400" r="6" fill="#3C9A4B" stroke="#2C7A3A" stroke-width=".8"/>
  <path d="M9 4.200Q6.400 2.200 4.400 4.200T4.400 8.600Q6.400 10.600 9 8.600" fill="none" stroke="#fff" stroke-width="1.800"/>
  <path d="M15.500 9.800L20.400 12.200 15.500 14.600Z" fill="#7CCB86" stroke="#1F7A38" stroke-width=".9" stroke-linejoin="round"/>
</svg>
<span class="x" id="ol_r2" style="left:1578.4px;top:145.600px;letter-spacing:1.03px">Main</span>
<div class="a" style="left:1570px;top:167px;width:174px;height:23px;background:#D9D9D9"></div>
<svg style="left:1575px;top:170px" width="19" height="14" viewBox="0 0 19 14">
  <circle cx="4.600" cy="8.800" r="3.900" fill="#47944F" stroke="#2F7A3D" stroke-width=".7"/><circle cx="4.200" cy="8" r="2" fill="#84C486" opacity=".75"/>
  <rect x="12.600" y="0" width="6.300" height="7.300" fill="#fff"/>
  <text transform="translate(13.500,6.900) scale(.72,1)" font-family="Liberation Sans,sans-serif" font-size="9.500" fill="#C4263A">S</text>
</svg>
<span class="x" id="ol_r3" style="left:1598.4px;top:168.600px;letter-spacing:0.44px">main(String[]) : void</span>
<!--OL-END-->

<!--CO-BEGIN-->
<!-- Console header -->
<svg style="left:338px;top:784px" width="15" height="15" viewBox="0 0 15 15">
  <path d="M.5 .5H12Q13.800 4 12.300 7.500T14 14.500H.5Z" fill="#F3F6FB" stroke="#CCD2DC"/>
  <path d="M.5 7.500H12M8.500 .5V14.500" stroke="#C4CCDA"/>
  <circle cx="5.200" cy="4.300" r="2.700" fill="#E98585"/>
  <path d="M2.800 14V11L5.300 9 7.800 11V14Z" fill="#F5C96E"/>
</svg>
<span class="x" id="co_t1" style="left:357.7px;top:783px;color:#8C8C8C;letter-spacing:0.52px">Problems</span>
<svg style="left:438px;top:785px" width="13" height="13" viewBox="0 0 13 13">
  <rect x=".9" y=".9" width="11.200" height="8.600" rx="1.200" fill="#F8FAFF" stroke="#2B55A4" stroke-width="1.800"/>
  <path d="M3.200 4H7.500M3.200 6.200H9" stroke="#3A4F9A" stroke-width="1"/>
  <path d="M4.500 10V11.500H8.500V10M2 12.300H11" stroke="#2B55A4" stroke-width="1.500" fill="none"/>
</svg>
<span class="x" id="co_t2" style="left:455.1px;top:783px;letter-spacing:0.35px">Console</span>
<svg class="cx" style="left:522px;top:787px" width="10" height="10" viewBox="0 0 10 10"><path d="M.5 .5H2.800L5 2.700 7.200 .5H9.500V2.800L7.300 5 9.500 7.200V9.500H7.200L5 7.300 2.800 9.500H.5V7.200L2.700 5 .5 2.800Z" fill="#fff" stroke="#505050" stroke-width="1"/></svg>
<!-- Console toolbar -->
<svg id="cosvg" style="left:1560px;top:776px" width="360" height="30" viewBox="1560 776 360 30">
  <rect x="1564.700" y="784.700" width="10" height="10" rx="1.500" fill="#B4B4B4" stroke="#CFCFCF" stroke-width="1.400"/>
  <path d="M1588 784.500L1597 793.500M1597 784.500L1588 793.500" stroke="#6A6A6A" stroke-width="4.300" stroke-linecap="round"/>
  <path d="M1610 782.500L1616.500 789M1616.500 782.500L1610 789" stroke="#8A8A8A" stroke-width="3.400" stroke-linecap="round"/><path d="M1610 782.500L1616.500 789M1616.500 782.500L1610 789" stroke="#D4D4D4" stroke-width="1.800" stroke-linecap="round"/>
  <path d="M1614 788L1621.500 795.500M1621.500 788L1614 795.500" stroke="#6A6A6A" stroke-width="4" stroke-linecap="round"/>
  <path d="M1629.500 780V797.500M1752.500 780V797.500" stroke="#8F8F8F"/>
  <!-- clear console -->
  <g transform="translate(1639,781)">
    <path d="M.5 .5H7L10.500 4V14.500H.5Z" fill="#FFFDF2" stroke="#C2A86A"/>
    <path d="M2.500 4.500H7M2.500 6.500H8.500M2.500 8.500H8.500M2.500 10.500H6" stroke="#6C8FC8" stroke-width="1"/>
    <path d="M9 9.500L14.500 15M14.500 9.500L9 15" stroke="#8A8A8A" stroke-width="2"/>
  </g>
  <!-- scroll lock -->
  <g transform="translate(1662,781)">
    <rect x="1.500" y=".5" width="13" height="13.500" fill="#F4F8FF" stroke="#8FA8D0"/>
    <rect x="10" y="1" width="4" height="12.500" fill="#D8E4F5" stroke="#8FA8D0" stroke-width=".7"/>
    <rect x="11" y="3" width="2" height="2.500" fill="#4F7FC0"/><rect x="11" y="8.500" width="2" height="2.500" fill="#4F7FC0"/>
    <rect x=".5" y="9.500" width="7" height="5.500" rx="1" fill="#F0B840" stroke="#B07A10" stroke-width=".9"/>
    <path d="M2 9.500V8Q2 6 4 6T6 8V9.500" fill="none" stroke="#B07A10" stroke-width="1.300"/>
    <path d="M1.500 11H6.500" stroke="#FBE08A" stroke-width="1"/>
  </g>
  <!-- word wrap -->
  <g transform="translate(1685,781)">
    <path d="M.5 .5H7.500L10.500 3.500V12.500H.5Z" fill="#FFFDF2" stroke="#C2A86A"/>
    <path d="M2.500 3.500H7M2.500 5.500H8.500M2.500 7.500H6M2.500 9.500H6" stroke="#6C8FC8" stroke-width="1"/>
    <path d="M13.500 2.500V8.500H9.500V6.500L5.500 9.700 9.500 12.900V10.900H15.300V2.500Z" fill="#FBE3A0" stroke="#D0A040" stroke-width=".8" stroke-linejoin="round"/>
  </g>
  <!-- toggles -->
  <rect x="1704.500" y="778.500" width="45" height="20" fill="#C9DEF5" stroke="#90BDEE"/>
  <path d="M1727.500 779V798" stroke="#90BDEE"/>
  <g transform="translate(1709,781)">
    <rect x="4.500" y=".5" width="10" height="7.500" rx="1" fill="#F4F8FF" stroke="#2F5FB0" stroke-width="1"/>
    <path d="M6.500 3H12.500M6.500 5.500H10.500" stroke="#2F5FB0" stroke-width="1"/>
    <rect x=".5" y="5.500" width="7" height="5.500" rx="1" fill="#DCE8FA" stroke="#2F5FB0" stroke-width="1"/>
    <path d="M4 11V13.500M1.500 14H6.500" stroke="#2F5FB0" stroke-width="1.300"/>
  </g>
  <g transform="translate(1732,781)">
    <rect x="4.500" y=".5" width="10" height="7.500" rx="1" fill="#F4F8FF" stroke="#2F5FB0" stroke-width="1"/>
    <path d="M6.300 2L9.700 6M9.700 2L6.300 6" stroke="#E0202A" stroke-width="1.600"/>
    <path d="M11 3H13M11 5.500H13" stroke="#2F5FB0" stroke-width="1"/>
    <rect x=".5" y="5.500" width="7" height="5.500" rx="1" fill="#DCE8FA" stroke="#2F5FB0" stroke-width="1"/>
    <path d="M4 11V13.500M1.500 14H6.500" stroke="#2F5FB0" stroke-width="1.300"/>
  </g>
  <!-- pin console -->
  <g transform="translate(1763,781)">
    <rect x=".5" y="4.500" width="12" height="10" fill="#F7FAFF" stroke="#6F8FC0"/>
    <rect x="1" y="5" width="11" height="2.500" fill="#3F78C6"/>
    <path d="M7.500 9L10.500 5.500" stroke="#555" stroke-width="1"/>
    <path d="M9 5.500L11 1.500 14.500 .8 15 3.500 12 6.500Z" fill="#2FA043" stroke="#1A7A2C" stroke-width=".7"/>
  </g>
  <!-- display selected console -->
  <g transform="translate(1787,781)">
    <rect x=".8" y=".8" width="12" height="9" rx="1" fill="#EFEFEF" stroke="#A0A0A0" stroke-width="1.500"/>
    <path d="M3 3.600H9M3 6H7" stroke="#A8A8A8" stroke-width="1"/>
    <path d="M5.500 10V12H8.500V10M2.500 13H11.500" stroke="#A0A0A0" stroke-width="1.500" fill="none"/>
  </g>
  <path d="M1809.500 787.500h8l-4 4.300z" fill="#8A8A8A"/>
  <!-- open console -->
  <g transform="translate(1828,780)">
    <rect x=".5" y="3.500" width="13" height="11" fill="#F4F9FF" stroke="#B89A52"/>
    <rect x="1" y="4" width="12" height="2.200" fill="#4F8FDC"/>
    <path d="M7 14Q12 13.500 13 8V14Z" fill="#F7E6A8"/>
    <path d="M11.500 -.5L12.700 2 15.300 3.200 12.700 4.400 11.500 7 10.300 4.400 7.700 3.200 10.300 2Z" fill="#FFF3B0" stroke="#C9971C" stroke-width=".9"/>
  </g>
  <path d="M1851.500 787.500h8l-4 4.300z" fill="#111"/>
</svg>
<div class="min" style="left:1871px;top:784px"></div>
<div class="max" style="left:1894px;top:784px"></div>
<!-- Console body -->
<span class="x" id="co_d1" style="left:337.2px;top:809.200px;letter-spacing:0.81px">&lt;terminated&gt;</span>
<span class="x" id="co_d2" style="left:443.2px;top:809.200px;letter-spacing:0.37px">Main [Java Application]</span>
<span class="x" id="co_d3" style="left:615.4px;top:809.200px;letter-spacing:0.35px">D:\Program</span>
<span class="x" id="co_d4" style="left:703.6px;top:809.200px;letter-spacing:0.21px">Files\Java\jre1.8.0_181\bin\javaw.exe</span>
<span class="x" id="co_d5" style="left:974.1px;top:809.200px;letter-spacing:-0.07px">(2020年4月3日</span>
<span class="x" id="co_d6" style="left:1082.2px;top:809.200px;letter-spacing:0.05px">上午10:40:56)</span>

<div class="a" style="left:334px;top:828px;width:1582px;height:1px;background:#A0A0A0"></div>
<span class="x mono" id="co_out" style="left:337.500px;top:832.500px">Hello Java!</span>
<svg style="left:330px;top:828px" width="156" height="59" viewBox="0 0 156 59"><rect x="1.700" y="1.700" width="152.600" height="55.600" fill="none" stroke="#FF0000" stroke-width="3.400"/></svg>
<div class="a sb" style="left:1896px;top:830px;width:20px;height:171px"></div>
<div class="a sb" style="left:336px;top:981px;width:1560px;height:20px"></div>
<svg style="left:1900px;top:837px" width="11" height="7" viewBox="0 0 11 7"><path d="M1.200 6L5.500 1.700 9.800 6" fill="none" stroke="#BDBDBD" stroke-width="2"/></svg>
<svg style="left:1900px;top:966px" width="11" height="7" viewBox="0 0 11 7"><path d="M1.200 1L5.500 5.300 9.800 1" fill="none" stroke="#BDBDBD" stroke-width="2"/></svg>
<svg style="left:342px;top:985px" width="7" height="11" viewBox="0 0 7 11"><path d="M6 1.200L1.700 5.500 6 9.800" fill="none" stroke="#BDBDBD" stroke-width="2"/></svg>
<svg style="left:1880px;top:985px" width="7" height="11" viewBox="0 0 7 11"><path d="M1 1.200L5.300 5.500 1 9.800" fill="none" stroke="#BDBDBD" stroke-width="2"/></svg>
<!--CO-END-->

<!--ST-BEGIN-->
<div class="sep" style="left:1100px;top:1004px;height:22px;background:#A0A0A0"></div>
<div class="sep" style="left:1219px;top:1004px;height:22px;background:#A0A0A0"></div>
<div class="sep" style="left:1331px;top:1004px;height:22px;background:#A0A0A0"></div>
<span class="x" id="st1" style="left:1107.4px;top:1005px;letter-spacing:0.89px">Writable</span>
<span class="x" id="st2" style="left:1226.9px;top:1005px;letter-spacing:0.39px">Smart Insert</span>
<span class="x" id="st3" style="left:1338.4px;top:1005px;letter-spacing:0.08px">7 : 43</span>
<div class="a" style="left:1442px;top:1010px;width:1px;height:15px;background:repeating-linear-gradient(#8F8F8F 0 1px,transparent 1px 3px)"></div>
<!-- IME bar -->
<div class="a" style="left:1690px;top:998px;width:230px;height:30px;background:#fff;border-top:1px solid #8FA0C4;border-bottom:1px solid #B4BED8;box-sizing:border-box"></div>
<svg id="imesvg" style="left:1660px;top:990px" width="260" height="40" viewBox="1660 990 260 40">
  <g transform="rotate(-16 1684 1012)">
    <rect x="1669" y="997" width="30" height="30" rx="5" fill="#F4511E"/>
    <path d="M1692.500 1004.500Q1684 1001.500 1677.500 1005T1680.500 1011.800Q1690.500 1013 1691 1016.500T1684 1021Q1679 1021.500 1675.500 1019.500" fill="none" stroke="#fff" stroke-width="5.200" stroke-linecap="round"/>
  </g>
  <g fill="#1E70CE" stroke="none">
    <!-- smiley -->
    <path d="M1771 1003a9.500 9.500 0 1 0 .01 0zm0 2.200a7.300 7.300 0 1 1 -.01 0z" fill-rule="evenodd"/>
    <rect x="1767.300" y="1008" width="1.800" height="4" rx=".9"/><rect x="1772.900" y="1008" width="1.800" height="4" rx=".9"/>
    <path d="M1766 1014.200Q1771 1019.500 1776 1014.200L1774.800 1013.500Q1771 1017 1767.200 1013.500Z"/>
    <!-- mic -->
    <rect x="1794.500" y="1003" width="7.500" height="13" rx="3.700"/>
    <path d="M1791.500 1011.500Q1791.500 1019 1798.300 1019T1805 1011.500" fill="none" stroke="#1E70CE" stroke-width="1.800"/>
    <rect x="1797.400" y="1019" width="1.800" height="3"/><rect x="1794.500" y="1021.300" width="7.600" height="1.700"/>
    <!-- keyboard -->
    <path d="M1817.500 1006h16.500q1.500 0 1.500 1.500v11q0 1.500 -1.500 1.500h-16.500q-1.500 0 -1.500 -1.500v-11q0 -1.500 1.500 -1.500zm.6 2.200v9.600h15.300v-9.600z" fill-rule="evenodd"/>
    <path d="M1819 1009.200h2.400v2.200h-2.400zM1822.500 1009.200h2.400v2.200h-2.400zM1826 1009.200h2.400v2.200h-2.400zM1829.500 1009.200h2.600v2.200h-2.600zM1819 1012.400h2.400v2.200h-2.400zM1822.500 1012.400h2.400v2.200h-2.400zM1826 1012.400h2.400v2.200h-2.400zM1829.500 1012.400h2.600v2.200h-2.600zM1820.500 1015.600h10v1.500h-10z"/>
    <!-- shirt -->
    <path d="M1876 1004.800Q1879.500 1007 1883 1004.800L1888.300 1008 1886.300 1012 1884.300 1011V1021.500H1874.700V1011L1872.700 1012 1870.700 1008Z"/>
    <!-- grid -->
    <rect x="1898.500" y="1005" width="7" height="7"/><rect x="1898.500" y="1014" width="7" height="7"/><rect x="1907.500" y="1014" width="7" height="7"/>
    <path d="M1907.500 1005h7v7h-7zm1.700 1.700v3.600h3.600v-3.600z" fill-rule="evenodd"/>
  </g>
  <!-- person (grey) -->
  <g fill="#B4C0D8"><circle cx="1852.500" cy="1008.500" r="3.400"/><path d="M1846 1020Q1846 1012.500 1852.500 1012.500T1859 1016V1020Z"/></g>
  <rect x="1854.500" y="1014.500" width="7.500" height="8" fill="#fff" stroke="#B4C0D8"/>
  <path d="M1858.200 1017v1.200M1858.200 1019.600v1.200" stroke="#8FA0C4" stroke-width="1.100"/>
</svg>
<span class="x" id="ime1" style="left:1707px;top:1001.500px;color:#1E70CE;font-weight:bold;font-size:20px;line-height:24px;height:24px">中</span>
<span class="x" id="ime2" style="left:1737px;top:1002px;color:#1E70CE;font-weight:bold;font-size:20px;line-height:24px;height:24px">°</span><span class="x" id="ime3" style="left:1744.500px;top:992.500px;color:#1E70CE;font-weight:bold;font-size:27px;line-height:30px;height:30px">,</span>
<!--ST-END-->

<!-- ===== Status bar ===== -->
<div id="status"></div>

</body>
</html>
